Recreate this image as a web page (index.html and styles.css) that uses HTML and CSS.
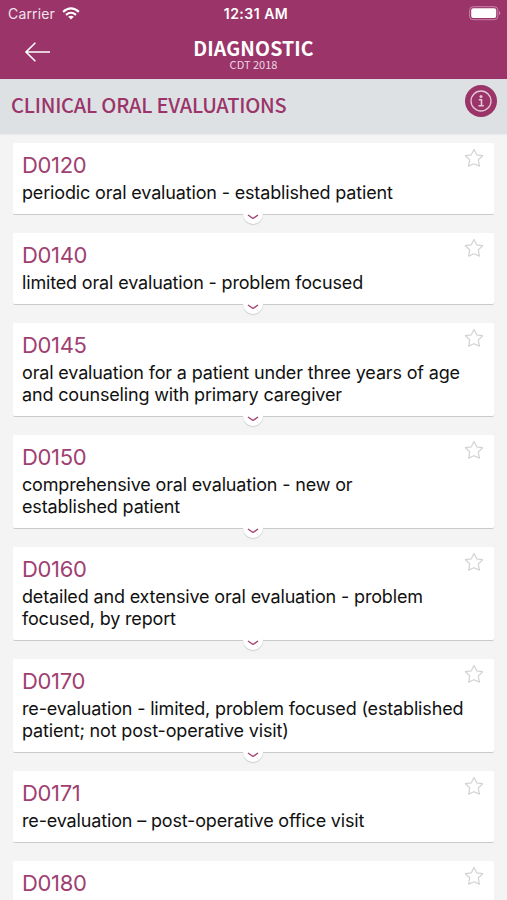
FILE: index.html
```html
<!DOCTYPE html>
<html lang="en">
<head>
<meta charset="utf-8">
<title>Diagnostic</title>
<link rel="stylesheet" href="styles.css">
</head>
<body>
<svg class="defs" width="0" height="0">
  <symbol id="star" viewBox="0 0 20 20"><path d="M10 1.4 12.7 6.8 18.7 7.7 14.3 11.8 15.4 18.1 10 15.8 4.6 18.1 5.7 11.8 1.3 7.7 7.3 6.8Z" fill="none" stroke="#d3d3d3" stroke-width="1.2" stroke-linejoin="round"/></symbol>
  <symbol id="chevron" viewBox="0 0 20 20"><path d="M5 11 10 14.5 15 11" fill="none" stroke="#a5406f" stroke-width="1.4"/></symbol>
</svg>
<header class="top">
  <div class="status">
    <div class="carrier"><span>Carrier</span>
      <svg width="18" height="13" viewBox="0 0 18 13" fill="none" stroke="#fff" stroke-width="2.1"><path d="M1.1 4.9Q9 -2 16.9 4.9M4 7.9Q9 3.6 14 7.9"/><path d="M9 12.5 6.2 9.8Q9 7.5 11.8 9.8Z" fill="#fff" stroke="none"/></svg>
    </div>
    <div class="time">12:31 AM</div>
    <svg class="battery" width="32" height="15" viewBox="0 0 32 15"><rect x=".6" y=".7" width="28.3" height="13" rx="3.6" fill="none" stroke="#c984a8" stroke-width="1"/><rect x="2.2" y="2.3" width="25" height="9.8" rx="2" fill="#fff"/><path d="M30.2 5.1q2 2.1 0 4.2z" fill="#d39bbb"/></svg>
  </div>
  <div class="nav">
    <svg class="back" width="28" height="22" viewBox="0 0 28 22" fill="none" stroke="#fff" stroke-width="1.6"><path d="M26 11H2M11.4 1.8 2 11 11.4 20.2"/></svg>
    <div class="heading"><h1>DIAGNOSTIC</h1><p>CDT 2018</p></div>
  </div>
</header>
<section class="section">
  <h2>CLINICAL ORAL EVALUATIONS</h2>
  <svg class="info" width="32" height="32" viewBox="0 0 32 32"><circle cx="16" cy="16" r="16" fill="#9a3469"/><circle cx="16" cy="16" r="10" fill="none" stroke="#e6c8d8" stroke-width="1.3"/><circle cx="16" cy="11.6" r="1.5" fill="#e6c8d8"/><path d="M13.8 14.8H16.5V20.4M13.5 20.7H18.8" fill="none" stroke="#e6c8d8" stroke-width="1.6"/></svg>
</section>
<main class="list">
  <article class="card"><h3>D0120</h3><p>periodic oral evaluation - established patient</p><svg class="star"><use href="#star"/></svg><svg class="more"><use href="#chevron"/></svg></article>
  <article class="card"><h3>D0140</h3><p>limited oral evaluation - problem focused</p><svg class="star"><use href="#star"/></svg><svg class="more"><use href="#chevron"/></svg></article>
  <article class="card"><h3>D0145</h3><p>oral evaluation for a patient under three years of age<br>and counseling with primary caregiver</p><svg class="star"><use href="#star"/></svg><svg class="more"><use href="#chevron"/></svg></article>
  <article class="card"><h3>D0150</h3><p>comprehensive oral evaluation - new or<br>established patient</p><svg class="star"><use href="#star"/></svg><svg class="more"><use href="#chevron"/></svg></article>
  <article class="card"><h3>D0160</h3><p>detailed and extensive oral evaluation - problem<br>focused, by report</p><svg class="star"><use href="#star"/></svg><svg class="more"><use href="#chevron"/></svg></article>
  <article class="card"><h3>D0170</h3><p>re-evaluation - limited, problem focused (established<br>patient; not post-operative visit)</p><svg class="star"><use href="#star"/></svg><svg class="more"><use href="#chevron"/></svg></article>
  <article class="card"><h3>D0171</h3><p>re-evaluation – post-operative office visit</p><svg class="star"><use href="#star"/></svg></article>
  <article class="card"><h3>D0180</h3><svg class="star"><use href="#star"/></svg></article>
</main>
</body>
</html>
```

FILE: styles.css
```css
* { box-sizing: border-box; margin: 0; padding: 0; }
html, body { height: 900px; overflow: hidden; }
body { background: #f4f4f4; font-family: Inter, "Liberation Sans", sans-serif; color: #111; }
svg { display: block; }
.defs { position: absolute; }
.top { height: 79px; background: #9a3469; color: #fff; }
.status { height: 27px; display: grid; grid-template-columns: 1fr auto 1fr; align-items: center; padding: 0 6px 0 8px; font-size: 14px; }
.carrier { display: flex; align-items: center; gap: 7px; letter-spacing: .15px; color: #f3e2eb; }
.time { font-weight: 600; letter-spacing: .5px; margin-left: 3px; }
.battery { justify-self: end; }
.nav { height: 52px; display: grid; grid-template-columns: 60px 1fr 60px; }
.back { margin: 14px 0 0 24px; }
.heading { text-align: center; font-family: "Noto Sans CJK SC", "Noto Sans", sans-serif; padding-top: 10px; }
.heading h1 { font-size: 19.5px; line-height: 22px; font-weight: 700; letter-spacing: .1px; }
.heading p { font-size: 11px; line-height: 11px; color: #ecd5e1; }
.section { height: 56px; background: #dee1e4; border-bottom: 1px solid #e9ebec; display: flex; justify-content: space-between; padding: 6px 10px 0 11px; }
.section h2 { font: 500 20px/40px "Noto Sans CJK SC", "Noto Sans", sans-serif; letter-spacing: -.2px; color: #9a3469; }
.list { padding: 8px 13px 0; display: grid; gap: 18px; }
.card { position: relative; background: #fff; border-bottom: 1.5px solid #cacaca; border-radius: 2px; padding: 8px 9px 10px; min-height: 72px; }
.card h3 { font-size: 22px; line-height: 29px; font-weight: 400; color: #a03f71; letter-spacing: -.35px; }
.card p { font-size: 18px; line-height: 22px; padding-top: 2px; letter-spacing: -.16px; white-space: nowrap; }
.star { position: absolute; right: 10px; top: 5px; width: 20px; height: 20px; }
.more { position: absolute; left: 230px; bottom: -10px; width: 20px; height: 20px; background: #fff; border-radius: 50%; box-shadow: 0 1px 1px #ccc; clip-path: inset(8px -2px -3px -2px); }
```
